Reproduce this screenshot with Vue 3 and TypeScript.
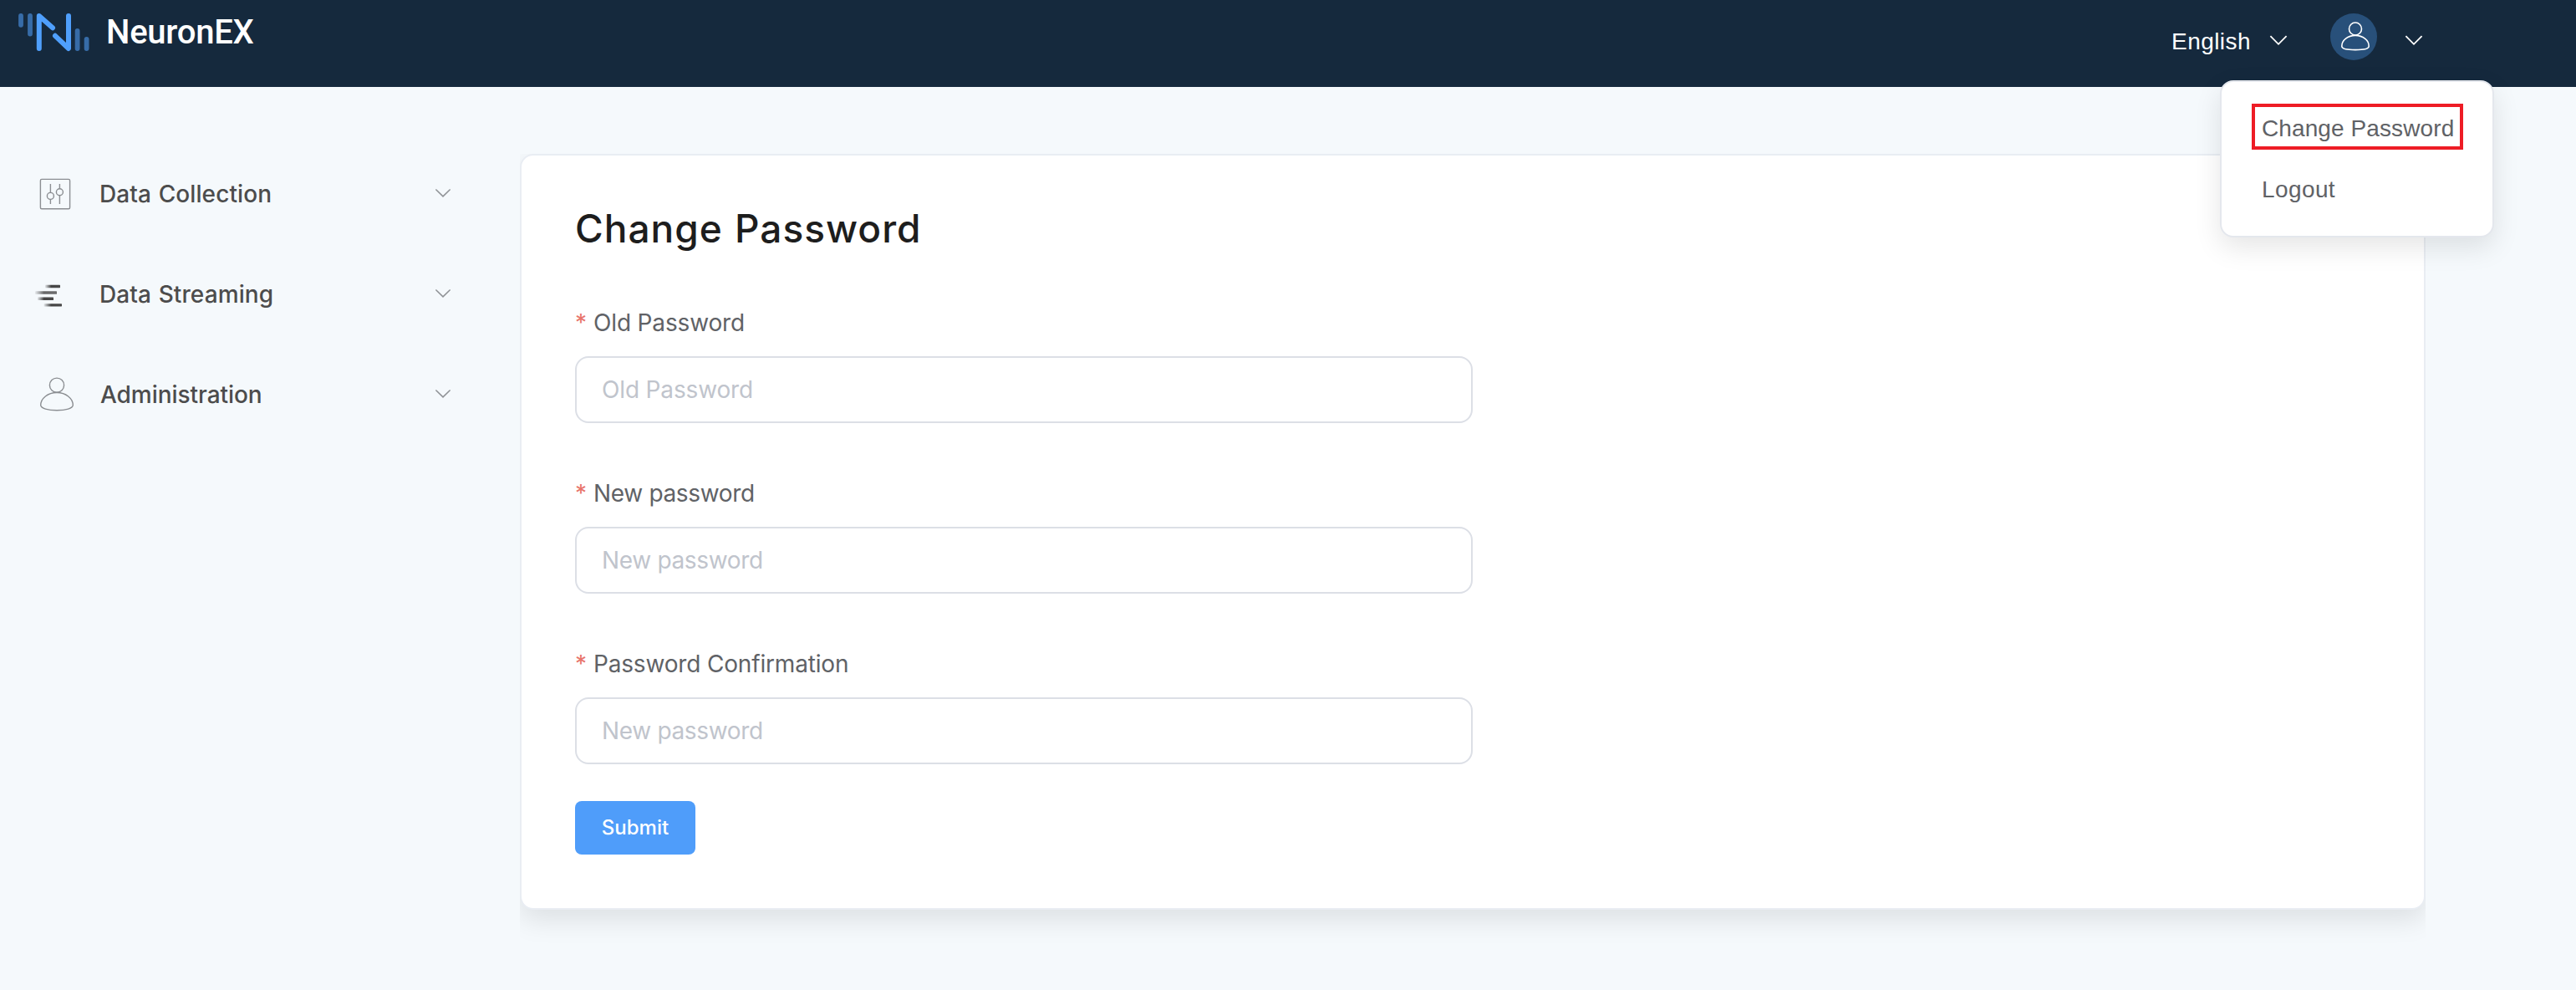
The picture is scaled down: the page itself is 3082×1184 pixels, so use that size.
<script setup lang="ts">
import { ref } from 'vue'

interface MenuItem {
  key: string
  label: string
}
interface Field {
  key: string
  label: string
  placeholder: string
  value: string
}

const menu: MenuItem[] = [
  { key: 'collection', label: 'Data Collection' },
  { key: 'streaming', label: 'Data Streaming' },
  { key: 'admin', label: 'Administration' },
]

const fields = ref<Field[]>([
  { key: 'old', label: 'Old Password', placeholder: 'Old Password', value: '' },
  { key: 'new', label: 'New password', placeholder: 'New password', value: '' },
  { key: 'confirm', label: 'Password Confirmation', placeholder: 'New password', value: '' },
])
</script>

<template>
  <div class="page">
    <header class="topbar">
      <svg class="logo" width="90" height="50" viewBox="0 0 90 50" fill="none" stroke-linecap="round" stroke-linejoin="round">
        <g stroke="#376ca8" stroke-width="5.8">
          <path d="M5 5v10.800M16 5v21.500M72.600 23v21M83.600 33v11" />
        </g>
        <g stroke="#4f9ffc" stroke-width="6">
          <path d="M26.800 44V5L43 19.300M46 28.800L62 44V5" />
        </g>
      </svg>
      <span class="brand">NeuronEX</span>
      <div class="actions">
        <span class="lang">English</span>
        <svg class="chev-lang" width="22" height="14" viewBox="0 0 22 14" fill="none" stroke="#fff" stroke-width="1.8">
          <path d="M1.400 2.200 11 11.800l9.600-9.600" />
        </svg>
        <span class="avatar">
          <svg width="56" height="56" viewBox="0 0 56 56" fill="none" stroke="#fff" stroke-width="1.6">
            <circle cx="30" cy="18.500" r="7.500" />
            <path d="M30 26.400C21 26.400 13.800 32 13.800 39.200C13.800 42.400 21 43.600 30 43.600S46.200 42.400 46.200 39.200C46.200 32 39 26.400 30 26.400Z" />
          </svg>
        </span>
        <svg class="chev-user" width="22" height="14" viewBox="0 0 22 14" fill="none" stroke="#fff" stroke-width="1.8">
          <path d="M1.400 2.200 11 11.800l9.600-9.600" />
        </svg>
      </div>
      <div class="dropdown">
        <div class="option marked">Change Password</div>
        <div class="option logout">Logout</div>
      </div>
    </header>

    <div class="body">
      <nav class="sidebar">
        <div v-for="item in menu" :key="item.key" class="item">
          <svg class="icon" width="60" height="60" viewBox="0 0 60 60" fill="none" stroke="#8b8e92" stroke-width="1.4">
            <g v-if="item.key === 'collection'">
              <rect x="8.400" y="12.400" width="35.200" height="35.300" rx="1.500" />
              <path d="M20.400 18v10.400M20.400 36.400V42M31.400 18v5.800M31.400 31.800V42" />
              <circle cx="20.400" cy="32.400" r="4" />
              <circle cx="31.400" cy="27.800" r="4" />
            </g>
            <g v-else-if="item.key === 'streaming'" stroke="none">
              <defs>
                <linearGradient id="dash" x1="0" x2="1">
                  <stop offset="0" stop-color="#444" stop-opacity="0.1" />
                  <stop offset="0.4" stop-color="#444" />
                  <stop offset="1" stop-color="#4a4a4a" />
                </linearGradient>
              </defs>
              <rect x="14" y="18.800" width="18" height="3.400" rx="0.600" fill="url(#dash)" />
              <rect x="2" y="26.200" width="26" height="3.600" rx="0.600" fill="url(#dash)" opacity="0.8" />
              <rect x="5" y="33.600" width="19" height="3.400" rx="0.600" fill="url(#dash)" />
              <rect x="12.500" y="41.200" width="21.500" height="3.200" rx="0.600" fill="url(#dash)" />
            </g>
            <g v-else>
              <circle cx="28" cy="18.700" r="8.600" />
              <path d="M28 27.500C17.400 27.500 8.700 34.300 8.700 42.600C8.700 46.500 17.400 48.700 28 48.700S47.300 46.500 47.300 42.600C47.300 34.300 38.600 27.500 28 27.500Z" />
            </g>
          </svg>
          <span class="name" :class="item.key">{{ item.label }}</span>
          <svg class="arrow" width="20" height="12" viewBox="0 0 20 12" fill="none" stroke="#8f9296" stroke-width="1.5">
            <path d="M1.400 1.500 10 9.900l8.600-8.400" />
          </svg>
        </div>
      </nav>

      <main class="card">
        <h1 class="title">Change Password</h1>
        <form class="form" @submit.prevent>
          <div v-for="f in fields" :key="f.key" class="field" :class="f.key">
            <label class="label"><span class="star">*</span>{{ f.label }}</label>
            <input v-model="f.value" class="input" type="text" :placeholder="f.placeholder" />
          </div>
          <button class="submit" type="button">Submit</button>
        </form>
      </main>
    </div>
  </div>
</template>

<style>
body {
  background: #f5f9fc;
}
</style>

<style scoped>
.page {
  width: 3082px;
  height: 1184px;
  overflow: hidden;
  background: #f5f9fc;
  font-family: Inter, 'Noto Sans', sans-serif;
  box-sizing: border-box;
}
.topbar {
  position: relative;
  z-index: 2;
  display: flex;
  align-items: flex-start;
  height: 104px;
  background: #15293d;
}
.logo {
  display: block;
  margin: 14px 0 0 20px;
}
.brand {
  margin: 19px 0 0 17px;
  font: 500 40px/40px Roboto, sans-serif;
  letter-spacing: -0.25px;
  color: #fff;
}
.actions {
  display: flex;
  align-items: flex-start;
  margin-left: auto;
  padding-right: 183px;
}
.lang {
  margin-top: 30px;
  width: 92px;
  white-space: nowrap;
  font: 28px/40px 'Liberation Sans', sans-serif;
  letter-spacing: 0.45px;
  color: #fff;
}
.chev-lang {
  margin: 41px 0 0 25px;
}
.avatar {
  width: 56px;
  height: 56px;
  margin: 16px 0 0 51px;
  border-radius: 50%;
  background: #28507a;
}
.avatar svg {
  display: block;
}
.chev-user {
  margin: 41px 0 0 33px;
}
.dropdown {
  position: absolute;
  top: 96px;
  right: 98px;
  width: 328px;
  height: 188px;
  box-sizing: border-box;
  padding: 26px 0 0 36px;
  border: 2px solid #e4e7ed;
  border-radius: 16px;
  background: #fff;
  box-shadow: 0 12px 32px rgba(0, 0, 0, 0.1);
}
.option {
  width: 253px;
  height: 55px;
  box-sizing: border-box;
  padding: 9px 0 0 12px;
  white-space: nowrap;
  font: 28px/40px 'Liberation Sans', sans-serif;
  color: #606266;
}
.option.logout {
  margin-top: 19px;
  letter-spacing: 0.4px;
}
.option.marked {
  padding: 6px 0 0 8px;
  border: 4px solid #ee1c25;
  letter-spacing: 0.1px;
}
.body {
  display: flex;
  align-items: flex-start;
}
.sidebar {
  width: 622px;
  padding-top: 68px;
}
.item {
  display: flex;
  align-items: center;
  height: 120px;
}
.icon {
  margin-left: 40px;
}
.name {
  flex: 1;
  margin-left: 19px;
  font-weight: 500;
  font-size: 28px;
  line-height: 40px;
  letter-spacing: 0.1px;
  word-spacing: 1px;
  color: #4c4c4c;
}
.name.admin {
  margin-left: 20px;
  letter-spacing: -0.05px;
}
.arrow {
  margin: 0 82px 3px 0;
}
.card {
  width: 2280px;
  height: 904px;
  box-sizing: border-box;
  margin-top: 80px;
  padding: 57px 64px 64px;
  border: 2px solid #e9edf3;
  border-radius: 16px;
  background: #fff;
  box-shadow: 0 12px 32px rgba(0, 0, 0, 0.1);
  clip-path: inset(0 0 -60px 0);
}
.title {
  margin: 0;
  font-weight: 500;
  font-size: 46px;
  line-height: 60px;
  letter-spacing: 1px;
  word-spacing: 1px;
  color: #1d1d1d;
}
.form {
  width: 1074px;
  padding-top: 61px;
}
.field {
  margin-bottom: 62px;
  letter-spacing: -0.15px;
}
.field.new {
  letter-spacing: -0.33px;
}
.field.confirm {
  margin-bottom: 44px;
  letter-spacing: -0.17px;
}
.label {
  display: flex;
  height: 44px;
  font-size: 28px;
  line-height: 44px;
  color: #606266;
}
.star {
  width: 22px;
  color: #e8756c;
}
.input {
  display: block;
  width: 100%;
  height: 80px;
  box-sizing: border-box;
  margin-top: 18px;
  padding: 0 30px;
  border: 2px solid #dcdfe6;
  border-radius: 16px;
  outline: none;
  background: #fff;
  font: 28px Inter, sans-serif;
  letter-spacing: inherit;
  color: #606266;
}
.field.confirm .input {
  letter-spacing: -0.33px;
}
.input::placeholder {
  color: #c0c4cc;
  opacity: 1;
}
.submit {
  display: block;
  width: 144px;
  height: 64px;
  padding: 0;
  border: 0;
  border-radius: 8px;
  background: #4f9dfa;
  font: 500 24px/64px Inter, sans-serif;
  color: #fff;
}
</style>
